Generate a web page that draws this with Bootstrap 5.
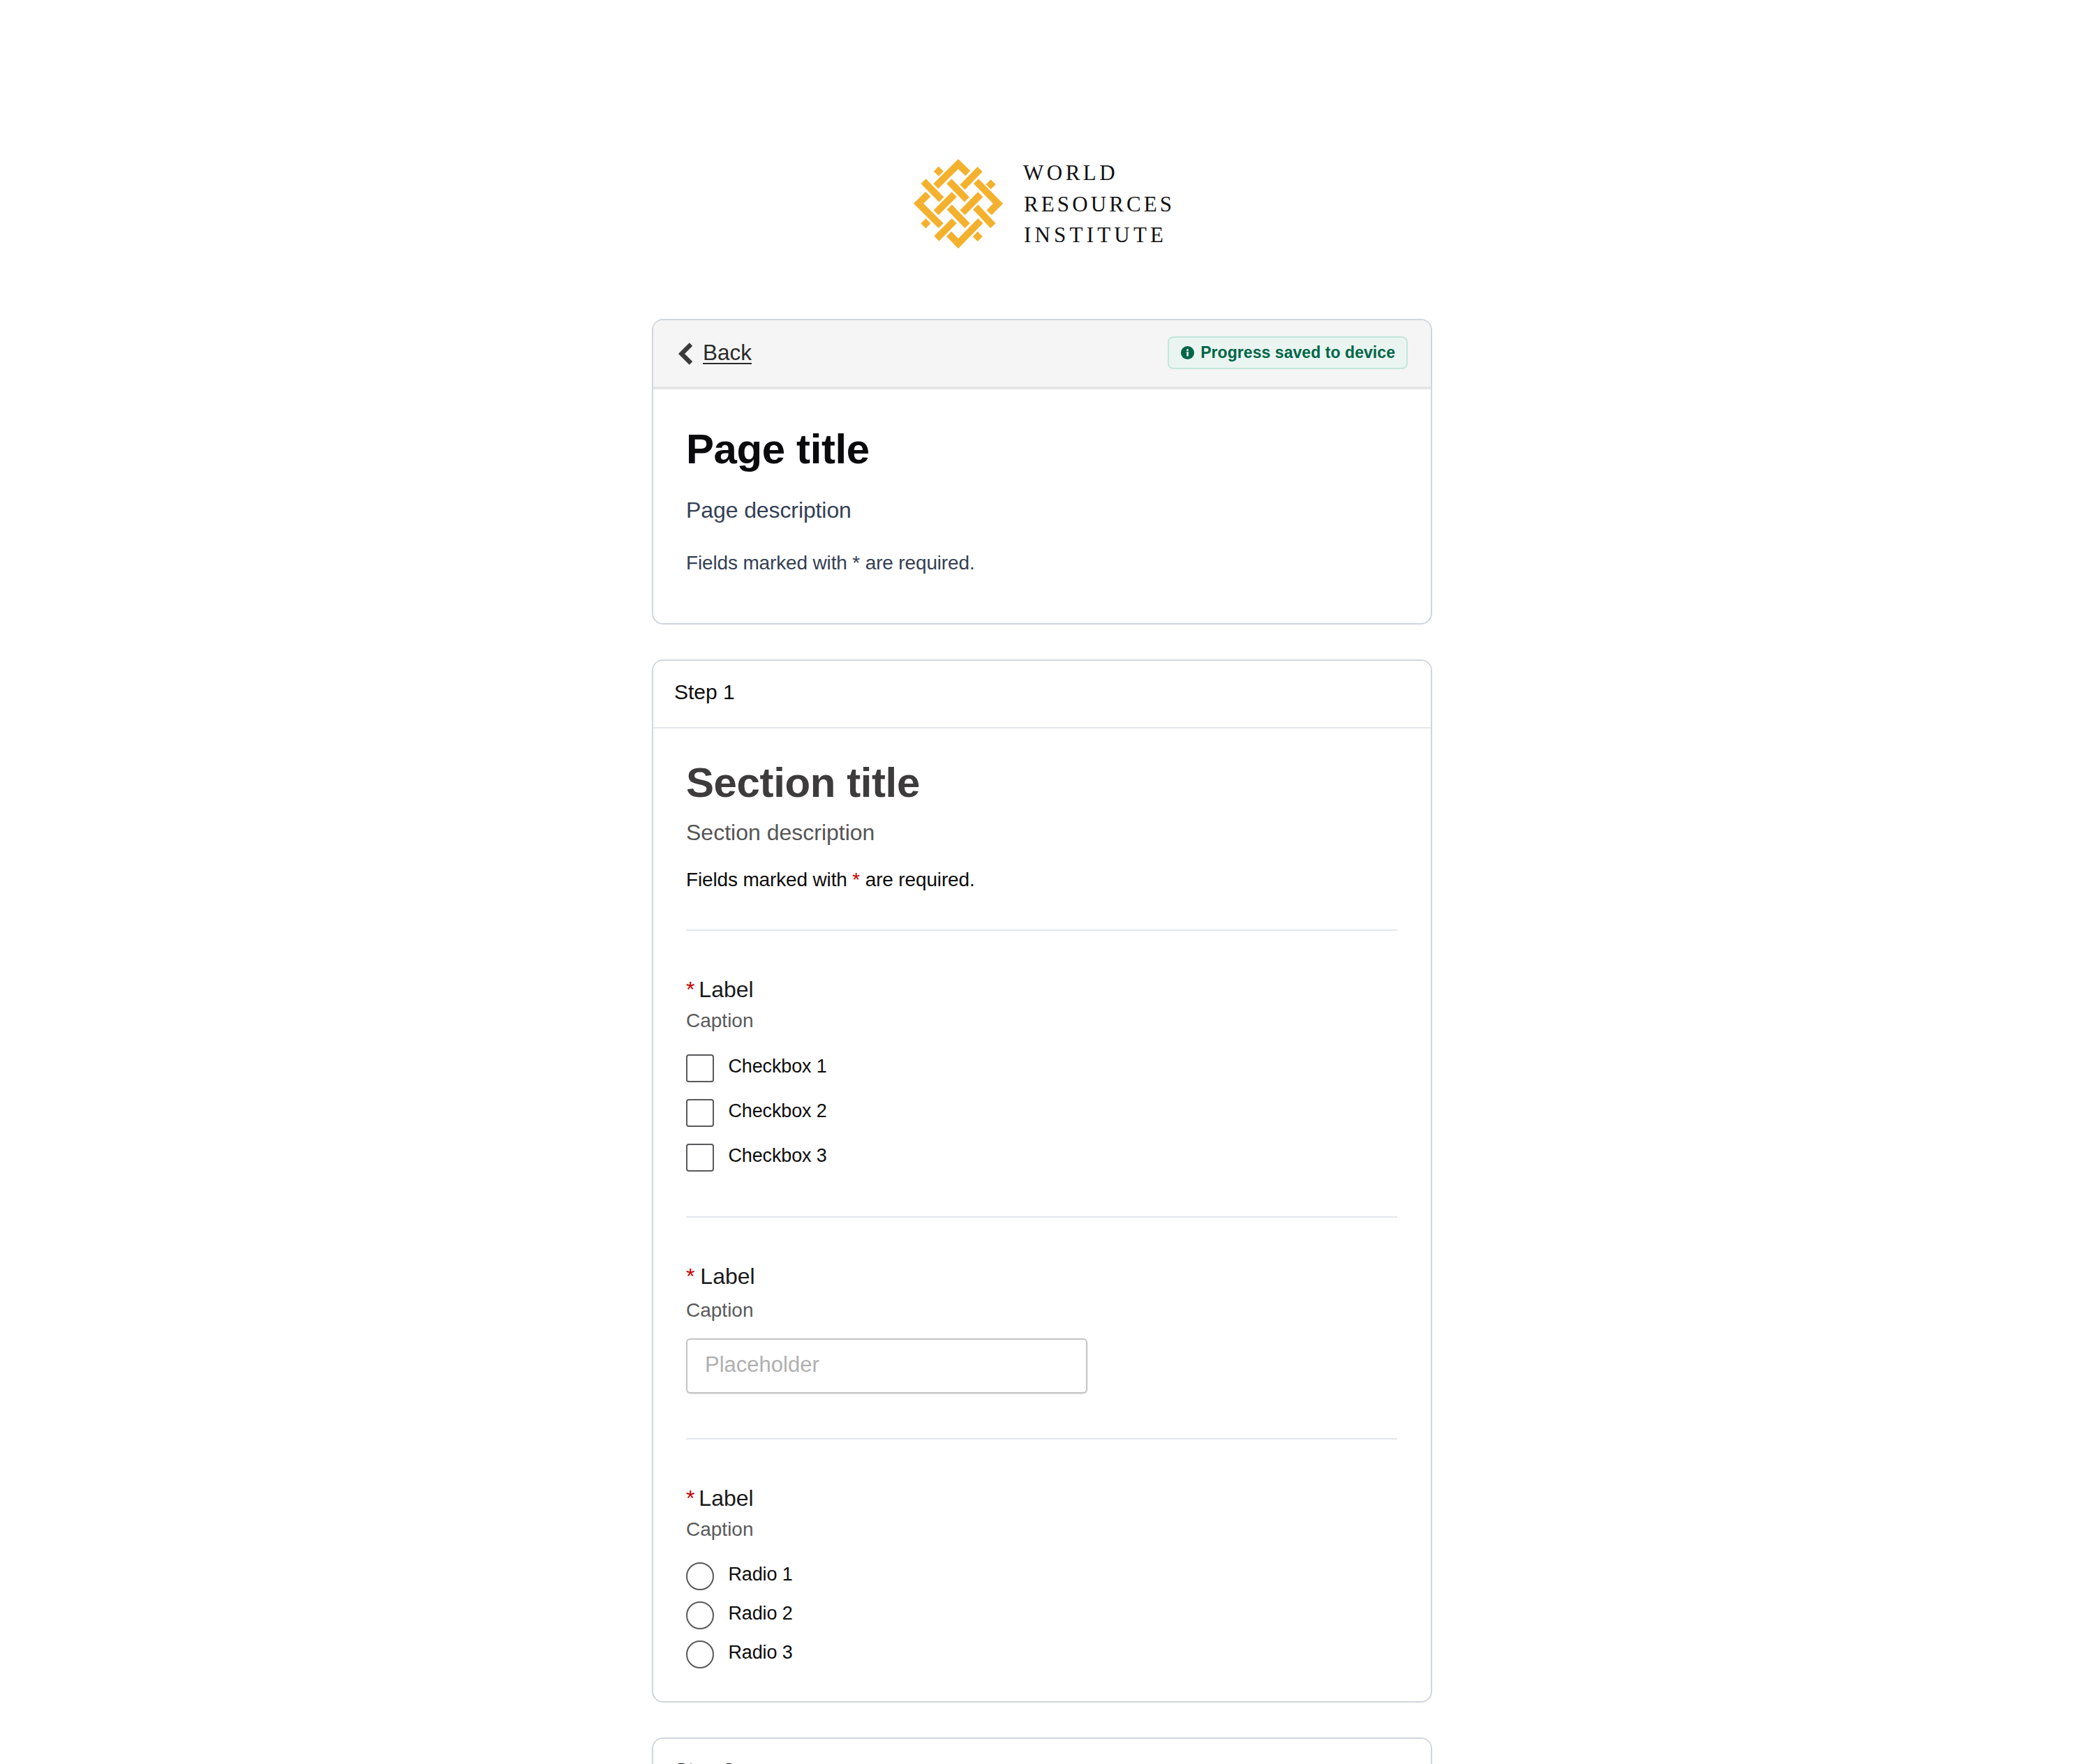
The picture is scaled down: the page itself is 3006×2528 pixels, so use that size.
<!doctype html>
<html lang="en">
<head>
<meta charset="utf-8">
<title>Form</title>
<link href="https://cdn.jsdelivr.net/npm/bootstrap@5.3.0/dist/css/bootstrap.min.css" rel="stylesheet">
<style>
html,body{height:100%;overflow:hidden;background:#fff}
body{font-family:"Liberation Sans",Arial,sans-serif;color:#0c0c0c;padding-right:20px}
.page-col{width:1118px;margin:0 auto}
.brand{height:356px;padding-top:228px;margin-bottom:101px;padding-left:375px;gap:30px}
.brand-mark{width:128px;height:128px;flex:none}
.brand-name{font-family:"Liberation Serif",serif;font-size:31px;line-height:44.5px;color:#111;margin-top:-2px}
.brand-line{display:block}
.brand-a{letter-spacing:4.5px;margin-left:-1px}
.brand-b{letter-spacing:4.1px}
.brand-c{letter-spacing:5.2px}
.form-panel{border:2px solid #d0d5dd;border-radius:16px;margin-bottom:50px;overflow:hidden;background:#fff}
.bar-saved{background:#f5f5f5;border-bottom:4px solid #e5e5e5;height:99px;padding:0 33px 0 36px;border-radius:0}
.back-link{font-size:31.5px;line-height:40px;color:#2b2b2b;gap:15px;text-decoration:none}
.back-link span{text-decoration:underline;text-underline-offset:4px;text-decoration-thickness:2px;margin-top:-3px}
.saved-chip{height:47px;padding:0 16px 0 17px;gap:9px;background:#eaf5f1;border:2px solid #c3e6db;border-radius:8px;color:#006647;font-size:23px;font-weight:700;letter-spacing:.06px;margin-bottom:2px}
.page-head{font-size:60px;line-height:72px;font-weight:700;letter-spacing:-.4px;color:#0b0b0d;margin:0}
.section-head{font-size:60px;line-height:72px;font-weight:700;letter-spacing:-.4px;color:#3d3b3c;margin:12px 0 0;}
.intro-a{padding:50px 48px 66px 47px}
.desc-a{font-size:32px;line-height:48px;color:#344054;margin:27px 0 32px;letter-spacing:-.1px}
.req-a{font-size:28px;line-height:40px;color:#344054;margin:0;letter-spacing:-.15px}
.step-bar{background:#fff;border-bottom:2px solid #e4e7ec;font-size:30px;line-height:40px;padding:25px 32px 30px 30px;height:97px;border-radius:0}
.step-body{padding:30px 48px 47px 47px}
.desc-b{font-size:32px;line-height:48px;color:#555;margin:11px 0 24px}
.req-b{font-size:28px;line-height:40px;color:#0c0c0c;margin:0;letter-spacing:-.15px}
.req-star{color:#c60000}
.rule{height:2px;background:#e4e7ec;border:0;opacity:1;margin:64px 0}
.rule-first{margin-top:51px}
.fld-label{display:block;font-size:32px;line-height:40px;margin:0;color:#1a1a1a}
.fld-label .req-star{margin-right:-3px}
.fld-label.wide .req-star{margin-right:-1px}
.fld-cap{font-size:28px;line-height:40px;color:#5a5a5a;margin:5px 0 0}
.fld-cap.roomy{margin:9px 0 20px}
.opt-list{margin-top:28px;gap:24px}
.opt-list.radios{margin-top:27px;gap:16.2px}
.opt{padding:0;margin:0;min-height:0;gap:20.5px}
.opt .form-check-input{width:40px;height:40px;margin:0;float:none;flex:none;border:2px solid #58595b;border-radius:4px;background-color:#fff}
.opt .form-check-input[type=radio]{border-radius:50%}
.opt .form-check-label{font-size:27px;line-height:40px;color:#0c0c0c;margin-top:-3px;letter-spacing:-.15px}
.text-entry{width:575px;height:79px;border:2px solid #c4c4c4;border-radius:6px;box-shadow:0 1px 2px rgba(0,0,0,.12);font-size:31px;padding:0 25px 4px;color:#333}
.text-entry::placeholder{color:#b0b0b0;opacity:1}
</style>
</head>
<body>
<main class="page-col">
  <div class="brand d-flex align-items-start">
    <svg class="brand-mark" viewBox="28 10 382 382" aria-hidden="true">
      <g fill="none" stroke="#f4b12e" stroke-width="30" stroke-linejoin="miter" stroke-miterlimit="4">
        <polyline points="123,126 219,31 260,71"/>
        <polyline points="295,105 389,200 351,239"/>
        <polyline points="90,160 49,200 145,295"/>
        <polyline points="179,330 219,371 314,274"/>
        <line x1="237" y1="130" x2="312" y2="53"/>
        <line x1="70" y1="105" x2="147" y2="183"/>
        <line x1="180" y1="105" x2="256" y2="183"/>
        <line x1="124" y1="239" x2="202" y2="161"/>
        <line x1="237" y1="239" x2="314" y2="161"/>
        <line x1="181" y1="215" x2="258" y2="295"/>
        <line x1="293" y1="215" x2="368" y2="295"/>
        <line x1="126" y1="350" x2="202" y2="274"/>
      </g>
      <g fill="#f4b12e">
        <polygon points="135,41 156,62 135,83 114,62"/>
        <polygon points="358,97 379,118 358,139 337,118"/>
        <polygon points="80,264 101,285 80,306 59,285"/>
        <polygon points="302,320 323,341 302,362 281,341"/>
      </g>
    </svg>
    <div class="brand-name"><span class="brand-line brand-a">WORLD</span><span class="brand-line brand-b">RESOURCES</span><span class="brand-line brand-c">INSTITUTE</span></div>
  </div>

  <section class="card form-panel">
    <div class="card-header bar-saved d-flex align-items-center justify-content-between">
      <a class="back-link d-inline-flex align-items-center" href="#">
        <svg width="20" height="32" viewBox="0 0 20 32" aria-hidden="true"><polyline points="18,2.5 4.5,16 18,29.5" fill="none" stroke="#3a3a3a" stroke-width="6.5"/></svg>
        <span>Back</span>
      </a>
      <div class="saved-chip d-inline-flex align-items-center">
        <svg width="19" height="19" viewBox="0 0 19 19" aria-hidden="true"><circle cx="9.5" cy="9.5" r="9.5" fill="#006647"/><rect x="8.2" y="8" width="2.6" height="6.5" fill="#fff"/><rect x="8.2" y="4.4" width="2.6" height="2.4" fill="#fff"/></svg>
        <span>Progress saved to device</span>
      </div>
    </div>
    <div class="card-body intro-a">
      <h1 class="page-head">Page title</h1>
      <p class="desc-a">Page description</p>
      <p class="req-a">Fields marked with * are required.</p>
    </div>
  </section>

  <section class="card form-panel">
    <div class="card-header step-bar">Step 1</div>
    <div class="card-body step-body">
      <h2 class="section-head">Section title</h2>
      <p class="desc-b">Section description</p>
      <p class="req-b">Fields marked with <span class="req-star">*</span> are required.</p>
      <hr class="rule rule-first">

      <label class="fld-label"><span class="req-star">*</span> Label</label>
      <p class="fld-cap">Caption</p>
      <div class="opt-list d-flex flex-column">
        <div class="form-check opt d-flex"><input class="form-check-input" type="checkbox" id="c1"><label class="form-check-label" for="c1">Checkbox 1</label></div>
        <div class="form-check opt d-flex"><input class="form-check-input" type="checkbox" id="c2"><label class="form-check-label" for="c2">Checkbox 2</label></div>
        <div class="form-check opt d-flex"><input class="form-check-input" type="checkbox" id="c3"><label class="form-check-label" for="c3">Checkbox 3</label></div>
      </div>
      <hr class="rule">

      <label class="fld-label wide" for="t1"><span class="req-star">*</span> Label</label>
      <p class="fld-cap roomy">Caption</p>
      <input class="form-control text-entry" id="t1" type="text" placeholder="Placeholder">
      <hr class="rule">

      <label class="fld-label"><span class="req-star">*</span> Label</label>
      <p class="fld-cap">Caption</p>
      <div class="opt-list radios d-flex flex-column">
        <div class="form-check opt d-flex"><input class="form-check-input" type="radio" name="r" id="r1"><label class="form-check-label" for="r1">Radio 1</label></div>
        <div class="form-check opt d-flex"><input class="form-check-input" type="radio" name="r" id="r2"><label class="form-check-label" for="r2">Radio 2</label></div>
        <div class="form-check opt d-flex"><input class="form-check-input" type="radio" name="r" id="r3"><label class="form-check-label" for="r3">Radio 3</label></div>
      </div>
    </div>
  </section>

  <section class="card form-panel">
    <div class="card-header step-bar">Step 2</div>
    <div class="card-body step-body"></div>
  </section>
</main>
<script src="https://cdn.jsdelivr.net/npm/bootstrap@5.3.0/dist/js/bootstrap.bundle.min.js"></script>
</body>
</html>
